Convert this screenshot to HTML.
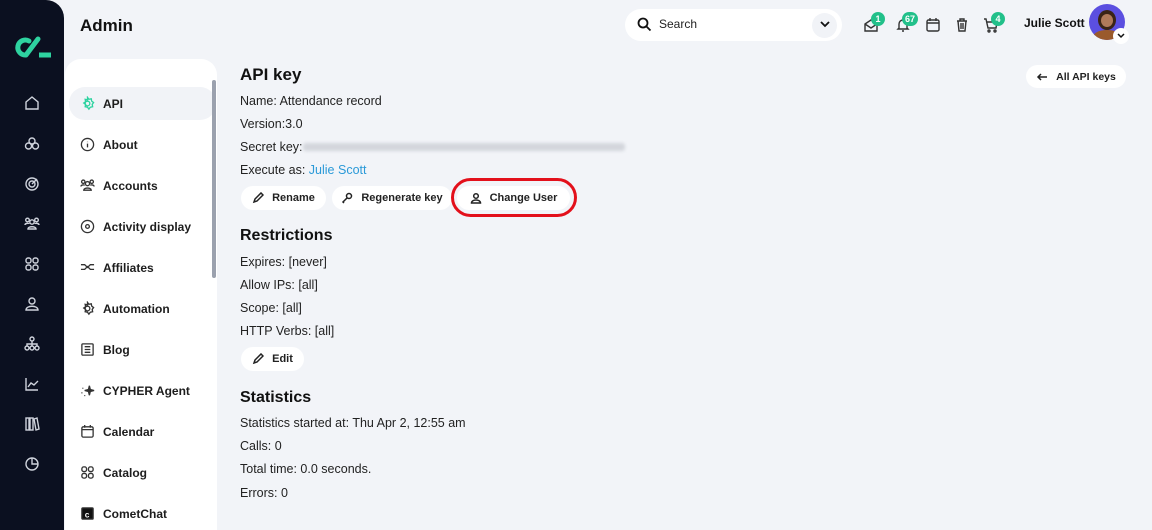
<!DOCTYPE html>
<html><head><meta charset="utf-8"><style>
*{box-sizing:border-box;margin:0;padding:0}
html,body{width:1152px;height:530px;overflow:hidden}
body{background:#f2f4f8;font-family:"Liberation Sans",sans-serif;color:#1a1a1a;position:relative}
.side{position:absolute;left:0;top:0;width:64px;height:530px;background:#0b1020;border-top-right-radius:18px}
.side svg.i{position:absolute;left:24px;width:16px;height:16px;fill:none;stroke:#cfd3dc;stroke-width:1.4}
.menu{position:absolute;left:65px;top:59px;width:152px;height:471px;background:#fff;border-top-left-radius:16px;border-top-right-radius:16px;overflow:hidden}
.mi{position:absolute;left:0;font-size:12px;font-weight:bold;color:#1d1d1d}
.mi span{position:absolute;left:38px;white-space:nowrap}
.mi svg{position:absolute;left:15px;top:-1px;width:15px;height:15px;fill:none;stroke:#333;stroke-width:1.4}
.t{position:absolute;font-size:12.5px;white-space:nowrap;color:#222}
.h{position:absolute;font-size:17px;font-weight:bold;white-space:nowrap;color:#111}
.btn{position:absolute;height:24px;background:#fff;border-radius:12px;font-size:11px;font-weight:bold;display:flex;align-items:center;justify-content:center;gap:8px;color:#222}
.btn svg{width:12px;height:12px;fill:none;stroke:#222;stroke-width:1.5}
.ti{position:absolute;top:17px;width:16px;height:16px;fill:none;stroke:#333;stroke-width:1.4}
.badge{position:absolute;top:12px;height:14px;min-width:14px;padding:0 3px;border-radius:7px;background:#22c08a;color:#fff;font-size:9px;font-weight:bold;text-align:center;line-height:14px}
</style></head><body>
<div class="side">
<svg style="position:absolute;left:10px;top:33px" width="44" height="28" viewBox="0 0 44 28"><path d="M19 8 A7.5 7.5 0 1 0 16 22 L28 6" fill="none" stroke="#2ed3a0" stroke-width="5" stroke-linecap="round" stroke-linejoin="round"/><path d="M29 22 L41 22" stroke="#2ed3a0" stroke-width="5"/></svg>
<svg class="i" style="top:95px" viewBox="0 0 16 16"><path d="M2 7 8 2l6 5v7H2z"/></svg>
<svg class="i" style="top:136px" viewBox="0 0 16 16"><circle cx="8" cy="5" r="3"/><circle cx="4.5" cy="10" r="3"/><circle cx="11.5" cy="10" r="3"/></svg>
<svg class="i" style="top:176px" viewBox="0 0 16 16"><circle cx="8" cy="8" r="6"/><circle cx="8" cy="8" r="3"/><path d="M8 8l5-5"/></svg>
<svg class="i" style="top:216px" viewBox="0 0 16 16"><circle cx="8" cy="6" r="2.2"/><circle cx="3.5" cy="4" r="1.8"/><circle cx="12.5" cy="4" r="1.8"/><path d="M4 13c0-3 8-3 8 0zM1 9c0-2 4-2 4-1M15 9c0-2-4-2-4-1"/></svg>
<svg class="i" style="top:256px" viewBox="0 0 16 16"><rect x="2" y="2" width="5" height="5" rx="2"/><rect x="9" y="2" width="5" height="5" rx="2"/><rect x="2" y="9" width="5" height="5" rx="2"/><rect x="9" y="9" width="5" height="5" rx="2"/></svg>
<svg class="i" style="top:296px" viewBox="0 0 16 16"><circle cx="8" cy="5" r="3"/><path d="M2 14c0-5 12-5 12 0z"/></svg>
<svg class="i" style="top:336px" viewBox="0 0 16 16"><circle cx="8" cy="3" r="2"/><circle cx="3" cy="12" r="2"/><circle cx="8" cy="12" r="2"/><circle cx="13" cy="12" r="2"/><path d="M8 5v5M3 10V8h10v2"/></svg>
<svg class="i" style="top:376px" viewBox="0 0 16 16"><path d="M2 2v12h12M4 11l3-4 3 2 4-4"/></svg>
<svg class="i" style="top:416px" viewBox="0 0 16 16"><rect x="2" y="2" width="3" height="12"/><rect x="6" y="2" width="3" height="12"/><path d="M10 3l3-1 2 11-3 1z"/></svg>
<svg class="i" style="top:456px" viewBox="0 0 16 16"><circle cx="8" cy="8" r="6"/><path d="M8 2v6h6"/></svg>
</div>
<div class="h" style="left:80px;top:16px">Admin</div>
<div class="menu">
<div style="position:absolute;left:4px;top:28px;width:147px;height:33px;background:#f1f3f7;border-radius:16px"></div>
<div style="position:absolute;left:147px;top:21px;width:4px;height:198px;background:#9ba1ae;border-radius:2px"></div>
<div class="mi" style="top:38px"><svg viewBox="0 0 16 16" style="stroke:#2ed3a0"><circle cx="8" cy="8" r="2.5"/><path d="M8 1.5l1.5 2 2.5-.5.5 2.5 2 1.5-1.5 2 .5 2.5-2.5.5-1.5 2-1.5-2-2.5-.5.5-2.5-2-1.5 2-1.5-.5-2.5 2.5.5z"/></svg><span>API</span></div>
<div class="mi" style="top:79px"><svg viewBox="0 0 16 16"><circle cx="8" cy="8" r="6.5"/><path d="M8 7v4M8 5v.5"/></svg><span>About</span></div>
<div class="mi" style="top:120px"><svg viewBox="0 0 16 16"><circle cx="8" cy="6" r="2.2"/><circle cx="3.5" cy="4" r="1.8"/><circle cx="12.5" cy="4" r="1.8"/><path d="M4 13c0-3 8-3 8 0zM1 9c0-2 4-2 4-1M15 9c0-2-4-2-4-1"/></svg><span>Accounts</span></div>
<div class="mi" style="top:161px"><svg viewBox="0 0 16 16"><circle cx="8" cy="8" r="6.5"/><circle cx="8" cy="8" r="2"/></svg><span>Activity display</span></div>
<div class="mi" style="top:202px"><svg viewBox="0 0 16 16"><path d="M1 5h4l3 3 3-3h4M1 10h4l3-3 3 3h4"/></svg><span>Affiliates</span></div>
<div class="mi" style="top:243px"><svg viewBox="0 0 16 16"><circle cx="8" cy="8" r="2.5"/><path d="M8 1.5l1.5 2 2.5-.5.5 2.5 2 1.5-1.5 2 .5 2.5-2.5.5-1.5 2-1.5-2-2.5-.5.5-2.5-2-1.5 2-1.5-.5-2.5 2.5.5z"/></svg><span>Automation</span></div>
<div class="mi" style="top:284px"><svg viewBox="0 0 16 16"><rect x="2" y="2" width="12" height="12" rx="1"/><path d="M5 5h6M5 8h6M5 11h6"/></svg><span>Blog</span></div>
<div class="mi" style="top:325px"><svg viewBox="0 0 16 16"><path d="M10 3l1 4 4 1-4 1-1 4-1-4-4-1 4-1z" fill="#333"/><path d="M3 5v1M2 10v1M5 13v1"/></svg><span>CYPHER Agent</span></div>
<div class="mi" style="top:366px"><svg viewBox="0 0 16 16"><rect x="2" y="3" width="12" height="11" rx="1.5"/><path d="M2 6h12M5 1v3M11 1v3"/></svg><span>Calendar</span></div>
<div class="mi" style="top:407px"><svg viewBox="0 0 16 16"><rect x="2" y="2" width="5" height="5" rx="2"/><rect x="9" y="2" width="5" height="5" rx="2"/><rect x="2" y="9" width="5" height="5" rx="2"/><rect x="9" y="9" width="5" height="5" rx="2"/></svg><span>Catalog</span></div>
<div class="mi" style="top:448px"><svg viewBox="0 0 16 16"><rect x="2" y="2" width="12" height="12" rx="1" fill="#111"/><text x="5" y="12" font-size="9" fill="#fff" stroke="none" font-weight="bold">c</text></svg><span>CometChat</span></div>
</div>

<div style="position:absolute;left:625px;top:9px;width:217px;height:32px;background:#fff;border-radius:16px"></div>
<svg style="position:absolute;left:637px;top:17px" width="15" height="15" viewBox="0 0 15 15" fill="none" stroke="#111" stroke-width="1.8"><circle cx="6" cy="6" r="4.5"/><path d="M9.5 9.5l4 4"/></svg>
<div class="t" style="left:659px;top:17px;font-size:12px">Search</div>
<div style="position:absolute;left:812px;top:13px;width:25px;height:25px;background:#f1f3f7;border-radius:50%"></div>
<svg style="position:absolute;left:819px;top:19px" width="12" height="10" viewBox="0 0 12 10" fill="none" stroke="#111" stroke-width="1.8"><path d="M2 3l4 4 4-4"/></svg>

<svg class="ti" style="left:863px" viewBox="0 0 16 16"><path d="M2 7l6-4 6 4v7H2zM2 7l6 4 6-4"/></svg><div class="badge" style="left:871px">1</div>
<svg class="ti" style="left:895px" viewBox="0 0 16 16"><path d="M4 11V7a4 4 0 018 0v4l1 1H3zM7 14h2"/></svg><div class="badge" style="left:902px">67</div>
<svg class="ti" style="left:925px" viewBox="0 0 16 16"><rect x="2" y="3" width="12" height="11" rx="1.5"/><path d="M2 6h12M5 1v3M11 1v3"/></svg>
<svg class="ti" style="left:954px" viewBox="0 0 16 16"><path d="M3 4h10M6 4V2h4v2M4 4l1 10h6l1-10M7 6v6M9 6v6"/></svg>
<svg class="ti" style="left:983px" viewBox="0 0 16 16"><path d="M1 2h2l2 9h8l1-6H4"/><circle cx="6" cy="14" r="1"/><circle cx="12" cy="14" r="1"/></svg><div class="badge" style="left:991px">4</div>
<div class="t" style="left:1024px;top:16px;font-weight:bold;font-size:12px;color:#111">Julie Scott</div>
<div style="position:absolute;left:1089px;top:4px;width:36px;height:36px;border-radius:50%;background:#5b4fe0;overflow:hidden"><div style="position:absolute;left:9px;top:6px;width:18px;height:20px;border-radius:50%;background:#3a2416"></div><div style="position:absolute;left:12px;top:10px;width:12px;height:13px;border-radius:50%;background:#b07a5a"></div><div style="position:absolute;left:4px;top:26px;width:28px;height:14px;border-radius:50% 50% 0 0;background:#9a5a2c"></div></div>
<div style="position:absolute;left:1113px;top:28px;width:16px;height:16px;border-radius:50%;background:#fff"></div>
<svg style="position:absolute;left:1117px;top:33px" width="8" height="6" viewBox="0 0 8 6" fill="none" stroke="#111" stroke-width="1.5"><path d="M1 1l3 3 3-3"/></svg>

<div class="btn" style="left:1026px;top:65px;width:100px;height:23px;font-size:10.5px"><svg viewBox="0 0 12 12"><path d="M11 6H2M5 3L2 6l3 3"/></svg>All API keys</div>

<div class="h" style="left:240px;top:65px">API key</div>
<div class="t" style="left:240px;top:94px">Name: Attendance record</div>
<div class="t" style="left:240px;top:117px">Version:3.0</div>
<div class="t" style="left:240px;top:140px">Secret key:</div>
<div style="position:absolute;left:303px;top:143px;width:322px;height:8px;background:#d3d6dc;filter:blur(1.5px);border-radius:3px"></div>
<div class="t" style="left:240px;top:163px">Execute as: <span style="color:#2b9ad8">Julie Scott</span></div>
<div class="btn" style="left:241px;top:186px;width:85px"><svg viewBox="0 0 12 12"><path d="M2 10l1-3 6-6 2 2-6 6z"/></svg>Rename</div>
<div class="btn" style="left:332px;top:186px;width:120px"><svg viewBox="0 0 12 12"><circle cx="8" cy="4" r="2.5"/><path d="M6 6l-4 4 1 1"/></svg>Regenerate key</div>
<div class="btn" style="left:457px;top:186px;width:113px"><svg viewBox="0 0 12 12"><circle cx="6" cy="4" r="2.3"/><path d="M1.5 11c0-4 9-4 9 0z"/></svg>Change User</div>
<div style="position:absolute;left:451px;top:178px;width:126px;height:39px;border:3.5px solid #e3101b;border-radius:20px"></div>

<div class="h" style="left:240px;top:227px;font-size:16px">Restrictions</div>
<div class="t" style="left:240px;top:255px">Expires: [never]</div>
<div class="t" style="left:240px;top:278px">Allow IPs: [all]</div>
<div class="t" style="left:240px;top:301px">Scope: [all]</div>
<div class="t" style="left:240px;top:324px">HTTP Verbs: [all]</div>
<div class="btn" style="left:241px;top:347px;width:63px"><svg viewBox="0 0 12 12"><path d="M2 10l1-3 6-6 2 2-6 6z"/></svg>Edit</div>

<div class="h" style="left:240px;top:389px;font-size:16px">Statistics</div>
<div class="t" style="left:240px;top:416px">Statistics started at: Thu Apr 2, 12:55 am</div>
<div class="t" style="left:240px;top:439px">Calls: 0</div>
<div class="t" style="left:240px;top:462px">Total time: 0.0 seconds.</div>
<div class="t" style="left:240px;top:486px">Errors: 0</div>
</body></html>
